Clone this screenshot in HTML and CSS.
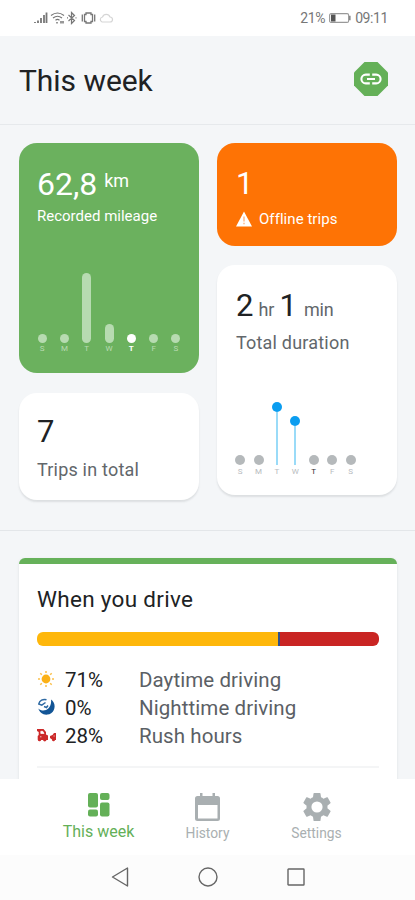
FILE: index.html
```html
<!DOCTYPE html>
<html lang="en">
<head>
<meta charset="utf-8">
<title>This week</title>
<link rel="stylesheet" href="styles.css">
</head>
<body>
<div class="phone">
  <div class="status">
    <svg class="status-icons" width="82" height="14" viewBox="0 0 82 14" fill="none" stroke="#777" stroke-width="1.2">
      <path d="M2 12v-1M5 12V9.500M8 12V7M11 12V4M13.500 12V1.500" stroke-width="1.800"/>
      <path d="M18 4.500q6.500-5 13 0M20 7q4.500-3.500 9 0M22.500 9.200q2-1.500 4 0"/>
      <path d="M24 11v1.500M28 10v2.500M30 10v2.500" stroke-width="1.500"/>
      <path d="M35.500 4l6 5.500-3 3V1.500l3 3-6 5.500M34 6.800h1M42.500 6.800h1"/>
      <path d="M53 2h5v1.500h1.500v7H58V12h-5v-1.500h-1.500v-7H53zM49.300 3.500v7M61.700 3.500v7" stroke-width="1.300"/>
      <path d="M69 11h8a2.500 2.500 0 0 0 0-5 4 4 0 0 0-7.500 0 2.600 2.600 0 0 0-.5 5z" stroke="#d5d5d5"/>
    </svg>
    <div class="status-right">
      <span>21%</span>
      <svg width="22" height="10" viewBox="0 0 22 10"><rect x=".6" y=".6" width="19" height="8.800" rx="1.500" fill="none" stroke="#999" stroke-width="1.100"/><path d="M2 1.500h4.500v7H2z" fill="#555"/><path d="M20.800 2.800v4.400" stroke="#888" stroke-width="1.600"/></svg>
      <span>09:11</span>
    </div>
  </div>

  <header class="header">
    <h1 class="title">This week</h1>
    <svg class="badge" width="34" height="34" viewBox="0 0 34 34">
      <path d="M10.500 0h13L34 10.500v13L23.500 34h-13L0 23.500v-13z" fill="#64b058"/>
      <path d="M15.800 12.600h-4a4.400 4.400 0 0 0 0 8.800h4M18.200 12.600h4a4.400 4.400 0 0 1 0 8.800h-4M13 17h8" fill="none" stroke="#fff" stroke-width="2.100"/>
    </svg>
  </header>

  <main class="summary">
    <div class="column">
      <section class="card mileage">
        <div class="figure">62,8<span class="sup">km</span></div>
        <div class="caption small">Recorded mileage</div>
        <div class="chart bars">
          <div class="day"><i class="bar"></i><b>S</b></div>
          <div class="day"><i class="bar"></i><b>M</b></div>
          <div class="day"><i class="bar tall"></i><b>T</b></div>
          <div class="day"><i class="bar short"></i><b>W</b></div>
          <div class="day today"><i class="bar"></i><b>T</b></div>
          <div class="day"><i class="bar"></i><b>F</b></div>
          <div class="day"><i class="bar"></i><b>S</b></div>
        </div>
      </section>
      <section class="card trips">
        <div class="figure">7</div>
        <div class="caption">Trips in total</div>
      </section>
    </div>
    <div class="column">
      <section class="card offline">
        <div class="figure">1</div>
        <div class="caption small warn">
          <svg width="16" height="16" viewBox="0 0 16 16"><path d="M8 .5 16 15.500H0z" fill="#fff"/><path d="M8 5.500v5M8 11.800v1.500" stroke="#ffb98a" stroke-width="1.500"/></svg>
          <span>Offline trips</span>
        </div>
      </section>
      <section class="card duration">
        <div class="figure">2<span class="unit">hr</span>1<span class="unit wide">min</span></div>
        <div class="caption">Total duration</div>
        <div class="chart pins">
          <div class="day"><i class="dot"></i><b>S</b></div>
          <div class="day"><i class="dot"></i><b>M</b></div>
          <div class="day"><i class="dot blue"></i><i class="stem"></i><b>T</b></div>
          <div class="day"><i class="dot blue"></i><i class="stem low"></i><b>W</b></div>
          <div class="day today"><i class="dot"></i><b>T</b></div>
          <div class="day"><i class="dot"></i><b>F</b></div>
          <div class="day"><i class="dot"></i><b>S</b></div>
        </div>
      </section>
    </div>
  </main>

  <div class="details">
    <section class="drive">
      <h2 class="drive-title">When you drive</h2>
      <div class="split"><i class="seg-day"></i><i class="seg-night"></i><i class="seg-rush"></i></div>
      <div class="row">
        <svg width="18" height="18" viewBox="0 0 18 18"><circle cx="9" cy="9" r="4.400" fill="#fbb117"/><path d="M9 1v2M9 15v2M1 9h2M15 9h2M3.300 3.300l1.500 1.500M13.200 13.200l1.500 1.500M3.300 14.700l1.500-1.500M13.200 4.800l1.500-1.500" stroke="#fbc04a" stroke-width="1.500"/></svg>
        <span class="pct">71%</span><span class="label">Daytime driving</span>
      </div>
      <div class="row">
        <svg width="18" height="18" viewBox="0 0 18 18"><path d="M14 1.500A8.300 8.300 0 1 1 1.300 10.500C4.500 13.500 9 12.800 11.300 10.500S14.500 5 14 1.500z" fill="#125596"/><path d="M9.500 1.700C6 .7 2.500 2.500 1.800 6l3 1.200L8.500 4.500M7 8.500l2.500 1 1.500-2" fill="none" stroke="#2f6aa3" stroke-width="1.500"/></svg>
        <span class="pct">0%</span><span class="label">Nighttime driving</span>
      </div>
      <div class="row">
        <svg width="20" height="18" viewBox="0 0 20 18"><path d="M0 3h6.500L9 6v2.500l2 1V14H9.500a1.800 1.800 0 0 1-3.500 0H4.200a1.800 1.800 0 0 1-3.500-.5V10l1-1V6L0 5zM13 10l2.500-1L17 7h2v7h-1a1.500 1.500 0 0 1-3-.5l-2-1.500z" fill="#cc2a2a"/><path d="M3.800 5.300h2L7 7.500H3.800zM3 10.800h1.500M16.500 10h1.200" fill="#fff" stroke="#fff" stroke-width=".7"/></svg>
        <span class="pct">28%</span><span class="label">Rush hours</span>
      </div>
      <div class="rule"></div>
    </section>
  </div>

  <nav class="tabs">
    <div class="tab active">
      <svg width="22" height="24" viewBox="0 0 22 24" fill="#64b058"><rect width="10" height="14.500" rx="2"/><rect y="16.500" width="10" height="7" rx="2"/><rect x="12" width="9.500" height="7" rx="2"/><rect x="12" y="9.500" width="9.500" height="14" rx="2"/></svg>
      <span>This week</span>
    </div>
    <div class="tab">
      <svg width="25" height="28" viewBox="0 0 25 28"><path d="M2.500 3H5V0h2.500v3h10V0H20v3h2.500A2.500 2.500 0 0 1 25 5.500v20a2.500 2.500 0 0 1-2.500 2.500h-20A2.500 2.500 0 0 1 0 25.500v-20A2.500 2.500 0 0 1 2.500 3zM3 12v13.500h19.500V12z" fill="#a9afb1" fill-rule="evenodd"/></svg>
      <span>History</span>
    </div>
    <div class="tab">
      <svg width="28" height="28" viewBox="2 2 20 20"><path d="M19.430 12.980c.04-.32.070-.64.070-.98s-.03-.66-.070-.98l2.110-1.650c.19-.15.240-.42.120-.64l-2-3.460c-.12-.22-.39-.3-.61-.22l-2.490 1c-.52-.4-1.080-.73-1.690-.98l-.38-2.650A.488.488 0 0 0 14 2h-4c-.25 0-.46.180-.49.420l-.38 2.650c-.61.250-1.170.59-1.690.98l-2.490-1c-.23-.09-.49 0-.61.220l-2 3.460c-.13.220-.070.490.120.640l2.110 1.650c-.04.320-.070.650-.070.980s.03.660.070.980l-2.110 1.650c-.19.150-.24.420-.12.640l2 3.460c.12.220.39.300.61.220l2.490-1c.52.400 1.080.730 1.690.980l.38 2.650c.03.240.24.420.49.420h4c.25 0 .46-.18.490-.42l.38-2.650c.61-.25 1.170-.59 1.690-.98l2.490 1c.23.090.49 0 .61-.22l2-3.460c.12-.22.070-.49-.12-.64zM12 16a4 4 0 1 1 0-8 4 4 0 0 1 0 8z" fill="#a9afb1"/></svg>
      <span>Settings</span>
    </div>
  </nav>

  <div class="system">
    <svg width="18" height="20" viewBox="0 0 18 20"><path d="M16.500 1v18L1.500 10z"/></svg>
    <svg width="20" height="20" viewBox="0 0 20 20"><circle cx="10" cy="10" r="9"/></svg>
    <svg width="18" height="18" viewBox="0 0 18 18"><rect x="1" y="1" width="16" height="16" rx=".5"/></svg>
  </div>
</div>
</body>
</html>
```
FILE: styles.css
```css
* { box-sizing: border-box; }
body { margin: 0; font-family: Roboto, "Liberation Sans", sans-serif; background: #f4f6f8; color: #202224; }
svg { display: block; flex: none; }
i { display: block; flex: none; }
.phone { width: 415px; height: 900px; display: flex; flex-direction: column; overflow: hidden; }

.status { height: 36px; flex: none; background: #fff; display: flex; justify-content: space-between; padding: 11px 27px 0 33px; color: #777; }
.status-right { display: flex; align-items: center; height: 14px; font-size: 14px; line-height: 14px; letter-spacing: -.4px; gap: 4px; }

.header { height: 89px; flex: none; display: flex; justify-content: space-between; align-items: center; padding: 0 27px 2px 19px; border-bottom: 1px solid #e6e9ec; }
.title { margin: 0; font-size: 30px; line-height: 36px; font-weight: 400; letter-spacing: -.05px; padding-top: 4px; }

.summary { height: 406px; flex: none; display: grid; grid-template-columns: 180px 180px; gap: 18px; padding: 18px 19px 0; border-bottom: 1px solid #e3e6e9; }
.column { display: flex; flex-direction: column; gap: 19px; }
.card { border-radius: 18px; padding: 23px 18px 0 19px; background: #fff; box-shadow: 0 2px 2px rgba(60, 70, 80, .13); }
.mileage { height: 230px; margin-bottom: 1px; padding-left: 18px; background: #6bb15e; color: #fff; box-shadow: none; }
.trips { height: 107px; padding-top: 21px; padding-left: 18px; }
.offline { height: 103px; background: #fe7305; color: #fff; box-shadow: none; padding-top: 23px; }
.duration { height: 230px; padding-top: 23px; }
.figure { display: flex; align-items: baseline; font-size: 32px; line-height: 36px; }
.sup { font-size: 18px; line-height: 24px; align-self: flex-start; margin: 3px 0 0 7px; }
.unit { font-size: 18px; color: #62676b; margin: 0 5px 0 5px; }
.unit.wide { margin-left: 7px; letter-spacing: -.1px; }
.trips .figure, .offline .figure, .duration .figure { font-size: 31px; }
.caption { font-size: 18px; line-height: 24px; color: #62676b; letter-spacing: .2px; margin-top: 8px; }
.caption.small { font-size: 15px; line-height: 20px; letter-spacing: 0; color: #fff; margin-top: 4px; }
.caption.warn { display: flex; align-items: center; gap: 7px; margin-top: 7px; letter-spacing: .05px; }
.duration .caption { margin-top: 3px; }

.chart { display: flex; align-items: flex-end; }
.day { display: flex; flex-direction: column; align-items: center; flex: none; }
.day b { font-size: 8px; line-height: 8px; font-weight: 400; margin-top: 2px; }
.bars { height: 80px; margin: 47px 0 0 -6px; }
.bars .day { width: 22.3px; color: #b9dbb2; }
.bar { width: 9px; height: 9px; border-radius: 5px; background: #b7dbb1; }
.bar.tall { height: 70px; }
.bar.short { height: 19px; }
.bars .today { color: #fff; }
.bars .today b { font-weight: 700; }
.today .bar { background: #fff; }
.pins { height: 80px; margin: 41px 0 0 -5px; }
.pins .day { width: 18.4px; color: #b7bbbe; }
.pins .day b { margin-top: 3px; }
.dot { width: 10px; height: 10px; border-radius: 50%; background: #b5b9bb; }
.dot.blue { background: #0a9df0; }
.stem { width: 2px; height: 53px; background: #9adbf8; }
.stem.low { height: 39px; }
.pins .today { color: #333; }

.details { flex: 1; min-height: 0; padding: 27px 18px 0 19px; overflow: hidden; }
.drive { height: 260px; border-top: 6px solid #66b15a; border-radius: 6px 6px 0 0; background: #fff; padding: 20px 18px 0; box-shadow: 0 1px 3px rgba(60, 70, 80, .13); }
.drive-title { margin: 0; font-size: 22.5px; line-height: 30px; font-weight: 400; letter-spacing: .3px; }
.split { display: flex; height: 14px; margin: 18px 0 20px; width: 342px; border-radius: 6px; overflow: hidden; }
.seg-day { width: 241px; background: #feb70b; }
.seg-night { width: 2px; background: #31518b; }
.seg-rush { flex: 1; background: #c92523; }
.row { height: 28px; display: grid; grid-template-columns: 28px 74px 1fr; align-items: center; font-size: 20.5px; line-height: 28px; }
.row svg { margin-top: -3px; }
.row .label { color: #5b6065; letter-spacing: .08px; }
.rule { height: 2px; background: #f4f5f6; margin-top: 16px; }

.tabs { height: 76px; flex: none; background: #fff; display: grid; grid-template-columns: 109px 109px 109px; justify-content: center; }
.tab { display: flex; flex-direction: column; align-items: center; padding-top: 14px; font-size: 13.8px; line-height: 18px; gap: 3px; color: #a9afb1; }
.tab.active { font-size: 16px; color: #64b058; gap: 6px; }

.system { height: 45px; flex: none; background: #fcfcfc; display: flex; align-items: center; justify-content: center; gap: 69px; padding: 0 0 2px 0; }
.system svg { fill: none; stroke: #666; stroke-width: 1.4; stroke-linejoin: round; }
```
